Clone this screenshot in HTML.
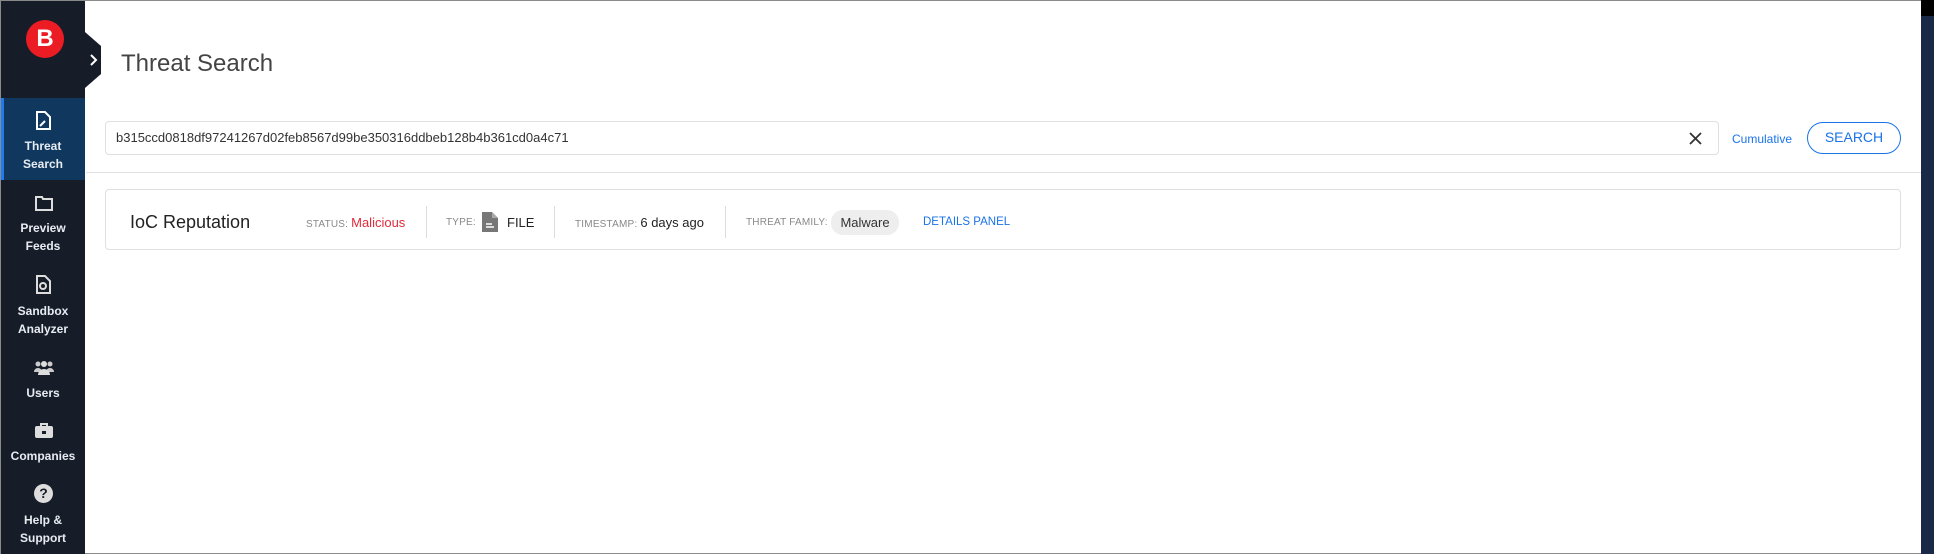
<!DOCTYPE html>
<html><head><meta charset="utf-8"><style>
*{margin:0;padding:0;box-sizing:border-box}
body{width:1934px;height:554px;overflow:hidden;background:#fff;font-family:"Liberation Sans",sans-serif;position:relative}
.a{position:absolute}
#frame{left:0;top:0;width:1934px;height:554px;border:1px solid #8a8a8a;border-right:none}
#side{left:1px;top:1px;width:84px;height:553px;background:#171d28}
.lab{position:absolute;left:0;width:84px;text-align:center;color:#e8ecf2;font-weight:bold;font-size:12px;line-height:18px}
.ic{position:absolute;left:34px}
.g{color:#888;font-size:10px;letter-spacing:.2px}
.dv{position:absolute;top:206px;width:1px;height:32px;background:#ddd}
</style></head><body>
<div id="frame" class="a"></div>
<div class="a" style="left:1921px;top:0;width:13px;height:554px;background:#1a2947"></div>
<div class="a" style="left:1921px;top:0;width:13px;height:16px;background:#000"></div>
<div id="side" class="a">
  <div class="a" style="left:25px;top:19px;width:38px;height:38px;border-radius:50%;background:#ec1c24;color:#fff;font-weight:bold;font-size:24px;text-align:center;line-height:38px">B</div>
  <div class="a" style="left:0;top:97px;width:84px;height:82px;background:#10385e"></div>
  <div class="a" style="left:0;top:97px;width:3px;height:82px;background:#1e7bf0"></div>
  <svg class="ic" style="top:110px" width="16" height="20" viewBox="0 0 16 20"><path d="M2 1h8l5 5v12H2z" fill="none" stroke="#fff" stroke-width="2"/><path d="M5 15l5-5" stroke="#fff" stroke-width="2"/></svg>
  <div class="lab" style="top:136px">Threat<br>Search</div>
  <svg class="ic" style="top:194px" width="18" height="16" viewBox="0 0 18 16"><path d="M1 2h6l1 2h9v11H1z" fill="none" stroke="#ddd" stroke-width="2"/></svg>
  <div class="lab" style="top:218px">Preview<br>Feeds</div>
  <svg class="ic" style="top:274px" width="16" height="20" viewBox="0 0 16 20"><path d="M2 1h8l5 5v12H2z" fill="none" stroke="#ddd" stroke-width="2"/><circle cx="8" cy="11" r="3" fill="none" stroke="#ddd" stroke-width="2"/></svg>
  <div class="lab" style="top:301px">Sandbox<br>Analyzer</div>
  <svg class="a" style="left:33px;top:359px" width="20" height="15" viewBox="0 0 20 15"><circle cx="4" cy="4" r="2.5" fill="#ccc"/><circle cx="16" cy="4" r="2.5" fill="#ccc"/><circle cx="10" cy="4" r="3" fill="#ddd"/><path d="M0 12a4 4 0 0 1 8 0zM12 12a4 4 0 0 1 8 0z" fill="#ccc"/><path d="M4 15a6 6 0 0 1 12 0z" fill="#ddd"/></svg>
  <div class="lab" style="top:383px">Users</div>
  <svg class="a" style="left:33px;top:422px" width="20" height="16" viewBox="0 0 20 16"><path d="M7 3V1h6v2" fill="none" stroke="#ddd" stroke-width="2"/><rect x="1" y="3" width="18" height="12" rx="2" fill="#ddd"/><rect x="8" y="8" width="4" height="3" fill="#171d28"/></svg>
  <div class="lab" style="top:446px">Companies</div>
  <div class="a" style="left:33px;top:483px;width:19px;height:19px;border-radius:50%;background:#ddd;color:#171d28;font-weight:bold;font-size:14px;text-align:center;line-height:19px">?</div>
  <div class="lab" style="top:510px">Help &amp;<br>Support</div>
</div>
<svg class="a" style="left:85px;top:32px" width="17" height="56" viewBox="0 0 17 56"><path d="M0 0L16 14V42L0 56z" fill="#171d28"/><path d="M6 23l5 5-5 5" fill="none" stroke="#fff" stroke-width="2"/></svg>
<div class="a" style="left:121px;top:50px;font-size:24px;color:#444">Threat Search</div>
<div class="a" style="left:105px;top:121px;width:1614px;height:34px;border:1px solid #e0e0e0;border-radius:4px"></div>
<div class="a" style="left:116px;top:130px;font-size:13px;color:#333">b315ccd0818df97241267d02feb8567d99be350316ddbeb128b4b361cd0a4c71</div>
<svg class="a" style="left:1689px;top:132px" width="13" height="13" viewBox="0 0 13 13"><path d="M1 1l11 11M12 1L1 12" stroke="#333" stroke-width="1.8"/></svg>
<div class="a" style="left:1732px;top:132px;font-size:12px;color:#1a73e8">Cumulative</div>
<div class="a" style="left:1807px;top:122px;width:94px;height:32px;border:1.5px solid #1a73e8;border-radius:16px;color:#1a73e8;font-size:14px;text-align:center;line-height:29px">SEARCH</div>
<div class="a" style="left:86px;top:172px;width:1835px;height:1px;background:#e0e0e0"></div>
<div class="a" style="left:105px;top:189px;width:1796px;height:61px;border:1px solid #e0e0e0;border-radius:4px"></div>
<div class="a" style="left:130px;top:212px;font-size:18px;color:#222">IoC Reputation</div>
<div class="a" style="left:306px;top:215px;font-size:13px"><span class="g">STATUS: </span><span style="color:#e02b3a">Malicious</span></div>
<div class="dv" style="left:426px"></div>
<div class="a g" style="left:446px;top:217px">TYPE:</div>
<svg class="a" style="left:482px;top:212px" width="16" height="20" viewBox="0 0 16 20"><path d="M0 0h10l6 6v14H0z" fill="#777"/><path d="M10 0v6h6" fill="#aaa"/><path d="M4 12h6M4 15h8" stroke="#fff" stroke-width="1.5"/></svg>
<div class="a" style="left:507px;top:215px;font-size:13px;color:#222">FILE</div>
<div class="dv" style="left:554px"></div>
<div class="a" style="left:575px;top:215px;font-size:13px"><span class="g">TIMESTAMP: </span><span style="color:#222">6 days ago</span></div>
<div class="dv" style="left:725px"></div>
<div class="a g" style="left:746px;top:217px">THREAT FAMILY:</div>
<div class="a" style="left:831px;top:210px;width:68px;height:25px;border-radius:12px;background:#eee;font-size:13px;color:#333;text-align:center;line-height:25px">Malware</div>
<div class="a" style="left:923px;top:216px;font-size:11.5px;color:#1a73e8">DETAILS PANEL</div>
</body></html>
